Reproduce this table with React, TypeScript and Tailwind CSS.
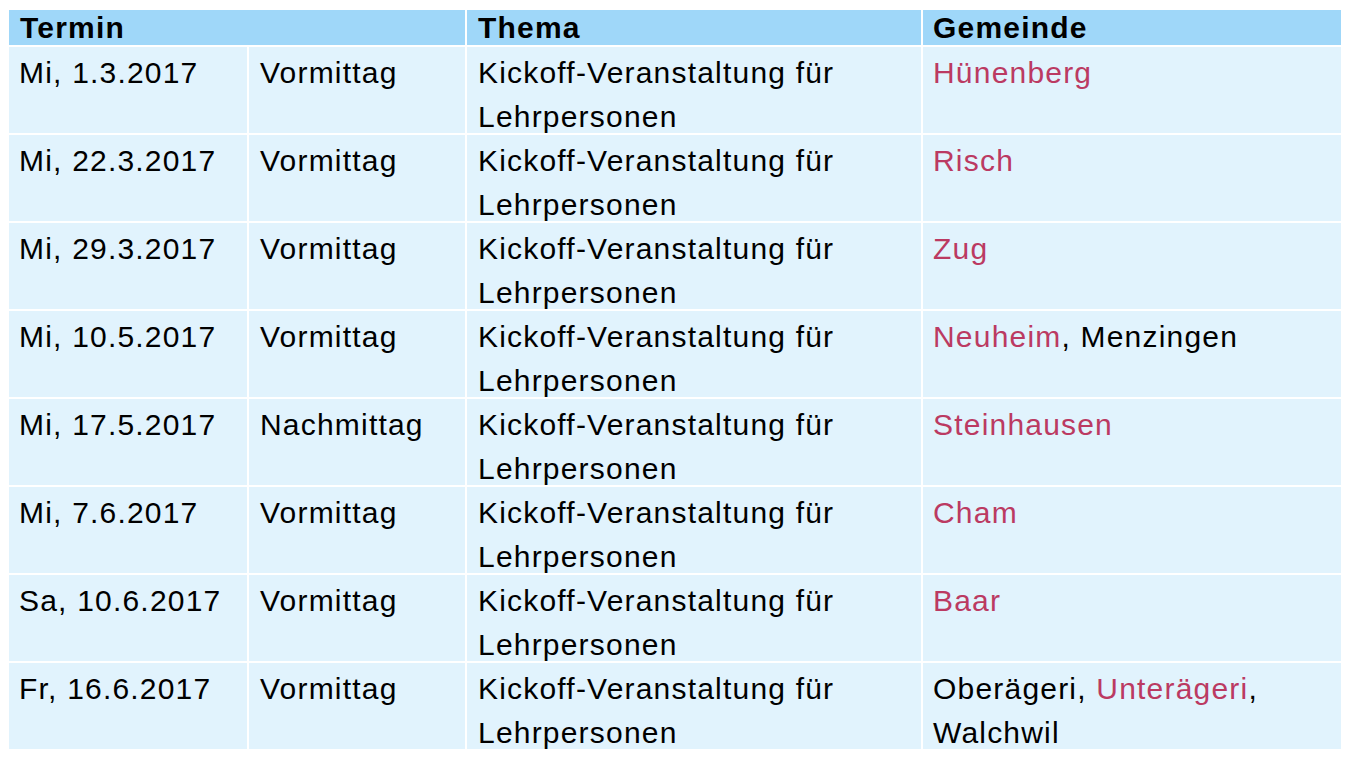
const rows: { date: string; time: string; places: { name: string; link?: boolean }[] }[] = [
  { date: "Mi, 1.3.2017", time: "Vormittag", places: [{ name: "Hünenberg", link: true }] },
  { date: "Mi, 22.3.2017", time: "Vormittag", places: [{ name: "Risch", link: true }] },
  { date: "Mi, 29.3.2017", time: "Vormittag", places: [{ name: "Zug", link: true }] },
  { date: "Mi, 10.5.2017", time: "Vormittag", places: [{ name: "Neuheim", link: true }, { name: "Menzingen" }] },
  { date: "Mi, 17.5.2017", time: "Nachmittag", places: [{ name: "Steinhausen", link: true }] },
  { date: "Mi, 7.6.2017", time: "Vormittag", places: [{ name: "Cham", link: true }] },
  { date: "Sa, 10.6.2017", time: "Vormittag", places: [{ name: "Baar", link: true }] },
  {
    date: "Fr, 16.6.2017",
    time: "Vormittag",
    places: [{ name: "Oberägeri" }, { name: "Unterägeri", link: true }, { name: "Walchwil" }],
  },
];

export default function App() {
  return (
    <div className="w-[1356px] h-[758px] bg-white overflow-hidden pt-[10px] pl-[9px] font-['Liberation_Sans',Arial,sans-serif] text-[30px] tracking-[1.2px] text-black">
      <div className="grid grid-cols-[238px_216px_454px_418px] gap-[2px] w-[1332px]">
        {/* header */}
        <div className="col-span-2 bg-[#9fd7f9] h-[35px] leading-[36px] pl-[11px] font-bold">Termin</div>
        <div className="bg-[#9fd7f9] h-[35px] leading-[36px] pl-[11px] font-bold">Thema</div>
        <div className="bg-[#9fd7f9] h-[35px] leading-[36px] pl-[10px] font-bold">Gemeinde</div>

        {rows.map((r) => (
          <>
            <div key={r.date + "a"} className="bg-[#e1f3fd] h-[86px] pt-[4px] pl-[10px] leading-[44px]">
              {r.date}
            </div>
            <div key={r.date + "b"} className="bg-[#e1f3fd] h-[86px] pt-[4px] pl-[11px] leading-[44px]">
              {r.time}
            </div>
            <div key={r.date + "c"} className="bg-[#e1f3fd] h-[86px] pt-[4px] pl-[11px] leading-[44px]">
              Kickoff-Veranstaltung für
              <br />
              Lehrpersonen
            </div>
            <div key={r.date + "d"} className="bg-[#e1f3fd] h-[86px] pt-[4px] pl-[10px] pr-[20px] leading-[44px]">
              {r.places.map((p, i) => (
                <span key={p.name}>
                  <span className={p.link ? "text-[#bb3a62]" : ""}>{p.name}</span>
                  {i < r.places.length - 1 ? ", " : ""}
                </span>
              ))}
            </div>
          </>
        ))}
      </div>
    </div>
  );
}
